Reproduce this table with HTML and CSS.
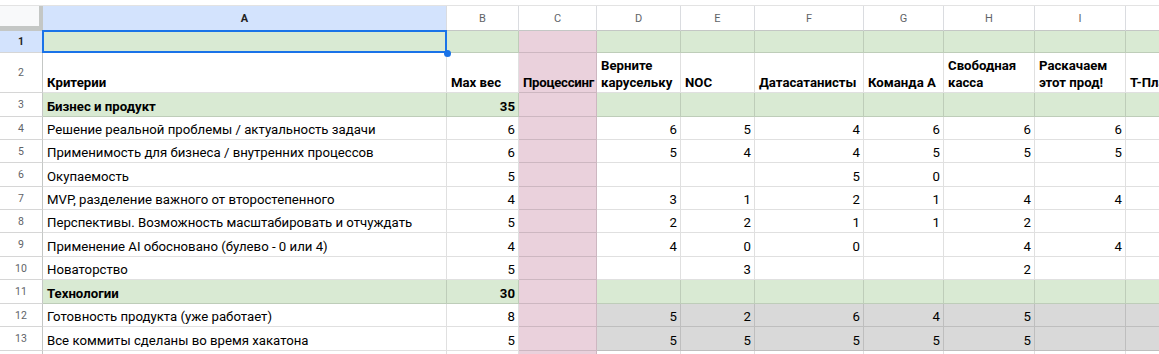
FILE: index.html
```html
<!DOCTYPE html>
<html lang="ru">
<head>
<meta charset="utf-8">
<title>Критерии</title>
<link rel="stylesheet" href="styles.css">
</head>
<body>
<div class="topline"></div>
<div class="sheet">
  <div class="corner"></div>
  <div class="ch sel">A</div><div class="ch">B</div><div class="ch">C</div><div class="ch">D</div><div class="ch">E</div><div class="ch">F</div><div class="ch">G</div><div class="ch">H</div><div class="ch">I</div><div class="ch">J</div>

  <div class="rh sel">1</div>
  <div class="c g"></div><div class="c g"></div><div class="c p"></div><div class="c g"></div><div class="c g"></div><div class="c g"></div><div class="c g"></div><div class="c g"></div><div class="c g"></div><div class="c g"></div>

  <div class="rh">2</div>
  <div class="c b">Критерии</div><div class="c b">Max вес</div><div class="c p b tight">Процессинг</div><div class="c b w">Верните карусельку</div><div class="c b">NOC</div><div class="c b">Датасатанисты</div><div class="c b">Команда А</div><div class="c b w">Свободная касса</div><div class="c b w">Раскачаем этот прод!</div><div class="c b">Т-Платформы</div>

  <div class="rh">3</div>
  <div class="c g b">Бизнес и продукт</div><div class="c g b n">35</div><div class="c p"></div><div class="c g"></div><div class="c g"></div><div class="c g"></div><div class="c g"></div><div class="c g"></div><div class="c g"></div><div class="c g"></div>

  <div class="rh">4</div>
  <div class="c">Решение реальной проблемы / актуальность задачи</div><div class="c n">6</div><div class="c p"></div><div class="c n">6</div><div class="c n">5</div><div class="c n">4</div><div class="c n">6</div><div class="c n">6</div><div class="c n">6</div><div class="c"></div>

  <div class="rh">5</div>
  <div class="c">Применимость для бизнеса / внутренних процессов</div><div class="c n">6</div><div class="c p"></div><div class="c n">5</div><div class="c n">4</div><div class="c n">4</div><div class="c n">5</div><div class="c n">5</div><div class="c n">5</div><div class="c"></div>

  <div class="rh">6</div>
  <div class="c">Окупаемость</div><div class="c n">5</div><div class="c p"></div><div class="c"></div><div class="c"></div><div class="c n">5</div><div class="c n">0</div><div class="c"></div><div class="c"></div><div class="c"></div>

  <div class="rh">7</div>
  <div class="c">MVP, разделение важного от второстепенного</div><div class="c n">4</div><div class="c p"></div><div class="c n">3</div><div class="c n">1</div><div class="c n">2</div><div class="c n">1</div><div class="c n">4</div><div class="c n">4</div><div class="c"></div>

  <div class="rh">8</div>
  <div class="c">Перспективы. Возможность масштабировать и отчуждать</div><div class="c n">5</div><div class="c p"></div><div class="c n">2</div><div class="c n">2</div><div class="c n">1</div><div class="c n">1</div><div class="c n">2</div><div class="c"></div><div class="c"></div>

  <div class="rh">9</div>
  <div class="c">Применение AI обосновано (булево - 0 или 4)</div><div class="c n">4</div><div class="c p"></div><div class="c n">4</div><div class="c n">0</div><div class="c n">0</div><div class="c"></div><div class="c n">4</div><div class="c n">4</div><div class="c"></div>

  <div class="rh">10</div>
  <div class="c">Новаторство</div><div class="c n">5</div><div class="c p"></div><div class="c"></div><div class="c n">3</div><div class="c"></div><div class="c"></div><div class="c n">2</div><div class="c"></div><div class="c"></div>

  <div class="rh">11</div>
  <div class="c g b">Технологии</div><div class="c g b n">30</div><div class="c p"></div><div class="c g"></div><div class="c g"></div><div class="c g"></div><div class="c g"></div><div class="c g"></div><div class="c g"></div><div class="c g"></div>

  <div class="rh">12</div>
  <div class="c">Готовность продукта (уже работает)</div><div class="c n">8</div><div class="c p"></div><div class="c s n">5</div><div class="c s n">2</div><div class="c s n">6</div><div class="c s n">4</div><div class="c s n">5</div><div class="c s"></div><div class="c s"></div>

  <div class="rh">13</div>
  <div class="c">Все коммиты сделаны во время хакатона</div><div class="c n">5</div><div class="c p"></div><div class="c s n">5</div><div class="c s n">5</div><div class="c s n">5</div><div class="c s n">5</div><div class="c s n">5</div><div class="c s"></div><div class="c s"></div>

  <div class="rh"></div>
  <div class="c"></div><div class="c"></div><div class="c p"></div><div class="c"></div><div class="c"></div><div class="c"></div><div class="c"></div><div class="c"></div><div class="c"></div><div class="c"></div>

  <div class="selection"><span class="handle"></span></div>
</div>
</body>
</html>
```
FILE: styles.css
```css
html, body {
  margin: 0;
  padding: 0;
  width: 1159px;
  height: 354px;
  overflow: hidden;
  background: #fff;
}

.topline {
  height: 5px;
  border-bottom: 1px solid #e3e3e3;
}

.sheet {
  position: relative;
  display: grid;
  width: max-content;
  grid-template-columns: 43px 404px 72px 78px 84px 74px 109px 80px 91px 91px 120px;
  grid-template-rows: 25px 22px 40px 24px 23px 23px 24px 23px 23px 24px 23px 24px 23px 24px 23px;
  font-family: Roboto, "Liberation Sans", Arial, sans-serif;
}

.corner {
  box-sizing: border-box;
  background: #f8f9fa;
  border-right: 4px solid #c4c7c5;
  border-bottom: 5px solid #c4c7c5;
}

.ch {
  box-sizing: border-box;
  display: flex;
  align-items: center;
  justify-content: center;
  font-size: 11px;
  color: #5f6368;
  background: #fff;
  border-right: 1px solid #dadce0;
  border-bottom: 1px solid #c4c7c5;
}

.rh {
  box-sizing: border-box;
  display: flex;
  align-items: center;
  justify-content: center;
  font-size: 10.5px;
  color: #5f6368;
  background: #fff;
  border-right: 1px solid #c4c7c5;
  border-bottom: 1px solid #d6d6d6;
}

.sel {
  background: #d3e3fd;
  color: #1f1f1f;
  font-weight: 700;
}

.c {
  box-sizing: border-box;
  display: flex;
  align-items: flex-end;
  padding: 0 3px 1px 4px;
  font-size: 13.2px;
  line-height: 17px;
  color: #000;
  white-space: nowrap;
  overflow: hidden;
  border-right: 1px solid rgba(0, 0, 0, 0.12);
  border-bottom: 1px solid rgba(0, 0, 0, 0.12);
}

.n { justify-content: flex-end; }
.b { font-weight: 700; }
.w { white-space: normal; }
.tight { padding-right: 0; letter-spacing: -0.25px; }

.g { background: #d9ead3; }
.p { background: #ead1dc; }
.s { background: #d9d9d9; }

.selection {
  position: absolute;
  left: 42px;
  top: 24px;
  width: 405px;
  height: 23px;
  box-sizing: border-box;
  border: 2px solid #1a73e8;
  pointer-events: none;
}

.handle {
  position: absolute;
  right: -5.5px;
  bottom: -5.5px;
  width: 7px;
  height: 7px;
  border-radius: 50%;
  background: #1a73e8;
}
```
